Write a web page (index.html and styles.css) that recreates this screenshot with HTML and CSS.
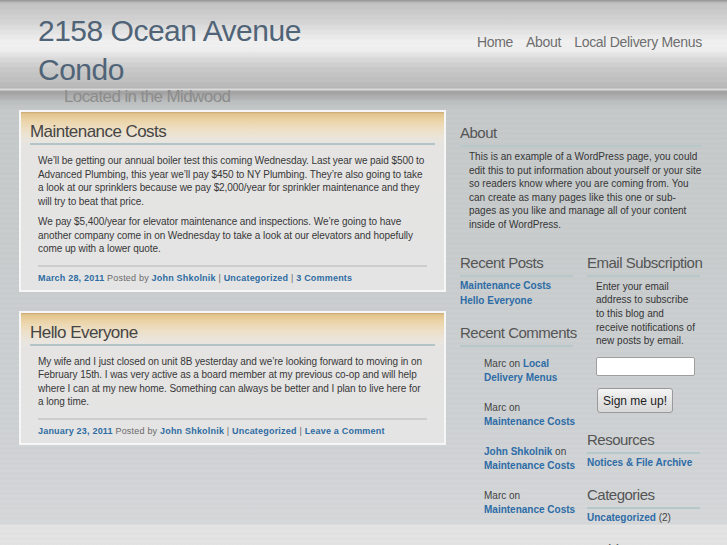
FILE: index.html
```html
<!DOCTYPE html>
<html lang="en">
<head>
<meta charset="utf-8">
<title>2158 Ocean Avenue Condo</title>
<link rel="stylesheet" href="styles.css">
</head>
<body>
<div class="page">
  <header class="masthead">
    <div class="brand">
      <h1 class="site-title">2158 Ocean Avenue Condo</h1>
      <p class="tagline">Located in the Midwood</p>
    </div>
    <nav class="nav">
      <a href="#">Home</a>
      <a href="#">About</a>
      <a href="#">Local Delivery Menus</a>
    </nav>
  </header>

  <div class="main">
    <div class="content">
      <article class="post">
        <h2 class="post-title">Maintenance Costs</h2>
        <div class="entry">
          <p>We’ll be getting our annual boiler test this coming Wednesday. Last year we paid $500 to Advanced Plumbing, this year we’ll pay $450 to NY Plumbing. They’re also going to take a look at our sprinklers because we pay $2,000/year for sprinkler maintenance and they will try to beat that price.</p>
          <p>We pay $5,400/year for elevator maintenance and inspections. We’re going to have another company come in on Wednesday to take a look at our elevators and hopefully come up with a lower quote.</p>
        </div>
        <div class="meta"><a href="#">March 28, 2011</a> Posted by <a href="#">John Shkolnik</a> | <a href="#">Uncategorized</a> | <a href="#">3 Comments</a></div>
      </article>

      <article class="post">
        <h2 class="post-title">Hello Everyone</h2>
        <div class="entry">
          <p>My wife and I just closed on unit 8B yesterday and we’re looking forward to moving in on February 15th. I was very active as a board member at my previous co-op and will help where I can at my new home. Something can always be better and I plan to live here for a long time.</p>
        </div>
        <div class="meta"><a href="#">January 23, 2011</a> Posted by <a href="#">John Shkolnik</a> | <a href="#">Uncategorized</a> | <a href="#">Leave a Comment</a></div>
      </article>
    </div>

    <aside class="sidebar">
      <section class="widget widget-about">
        <h3 class="widget-title">About</h3>
        <p class="about-text">This is an example of a WordPress page, you could edit this to put information about yourself or your site so readers know where you are coming from. You can create as many pages like this one or sub-pages as you like and manage all of your content inside of WordPress.</p>
      </section>

      <div class="columns">
        <div class="col">
          <section class="widget">
            <h3 class="widget-title">Recent Posts</h3>
            <ul class="links">
              <li><a href="#">Maintenance Costs</a></li>
              <li><a href="#">Hello Everyone</a></li>
            </ul>
          </section>
          <section class="widget">
            <h3 class="widget-title">Recent Comments</h3>
            <ul class="comments">
              <li>Marc on <a href="#">Local Delivery Menus</a></li>
              <li>Marc on <a href="#">Maintenance Costs</a></li>
              <li><a href="#">John Shkolnik</a> on <a href="#">Maintenance Costs</a></li>
              <li>Marc on <a href="#">Maintenance Costs</a></li>
            </ul>
          </section>
        </div>
        <div class="col">
          <section class="widget widget-email">
            <h3 class="widget-title">Email Subscription</h3>
            <p class="email-text">Enter your email address to subscribe to this blog and receive notifications of new posts by email.</p>
            <form class="email-form">
              <input class="email-input" type="text" aria-label="Email">
              <button class="email-button" type="button">Sign me up!</button>
            </form>
          </section>
          <section class="widget">
            <h3 class="widget-title">Resources</h3>
            <ul class="links">
              <li><a href="#">Notices &amp; File Archive</a></li>
            </ul>
          </section>
          <section class="widget">
            <h3 class="widget-title">Categories</h3>
            <ul class="links">
              <li><a href="#">Uncategorized</a> (2)</li>
            </ul>
          </section>
          <section class="widget">
            <h3 class="widget-title">Archives</h3>
          </section>
        </div>
      </div>
    </aside>
  </div>
</div>
</body>
</html>
```

FILE: styles.css
```css
html, body {
  margin: 0;
  padding: 0;
}

body {
  min-height: 100vh;
  font-family: "Liberation Sans", Arial, sans-serif;
  color: #3a3a3a;
  background:
    repeating-linear-gradient(to bottom,
      rgba(255, 255, 255, 0.025) 0,
      rgba(255, 255, 255, 0.025) 2px,
      rgba(0, 0, 0, 0.008) 2px,
      rgba(0, 0, 0, 0.008) 5px),
    linear-gradient(to bottom,
      #8e8e8e 0,
      #c2c2c2 3px,
      #cbcbcb 12px,
      #d4d4d4 22px,
      #e4e4e4 32px,
      #f1f1f1 42px,
      #efefef 50px,
      #dcdcdc 58px,
      #cacaca 68px,
      #c0c0c0 80px,
      #b6b6b6 88px,
      #dadada 89px,
      #dcdcdc 90px,
      #a0a0a0 91px,
      #a9a9a9 95px,
      #bcbfc0 102px,
      #c5c9ca 110px,
      #c8cccd 250px,
      #ced1d3 420px,
      #d5d7d9 524px,
      #e3e3e3 525px,
      #e4e4e4 100%);
  overflow: hidden;
}

.page {
  width: 727px;
}

a {
  text-decoration: none;
}

/* Header */
.masthead {
  display: flex;
  justify-content: space-between;
  align-items: flex-start;
}

.brand {
  width: 330px;
  padding-left: 38px;
}

.site-title {
  margin: 11px 0 0;
  font-size: 30px;
  line-height: 39px;
  font-weight: normal;
  letter-spacing: -0.5px;
  color: #506478;
}

.tagline {
  margin: -1px 0 0 26px;
  font-size: 17px;
  line-height: 18px;
  letter-spacing: -0.6px;
  color: #8c8c8c;
  white-space: nowrap;
}

.nav {
  display: flex;
  gap: 13px;
  padding: 34px 25px 0 0;
}

.nav a {
  font-size: 14px;
  line-height: 16px;
  letter-spacing: -0.3px;
  color: #6e6e6e;
}

/* Main layout */
.main {
  display: flex;
  align-items: flex-start;
  margin-top: 4px;
  padding-left: 19px;
}

.content {
  width: 427px;
  display: flex;
  flex-direction: column;
  gap: 19px;
}

.post {
  box-sizing: border-box;
  width: 427px;
  border: 2px solid #f6f6f6;
  padding: 9px 9px 5px;
  background: linear-gradient(to bottom,
    #c9a872 0,
    #e2c48e 2px,
    #ebd3a6 8px,
    #ede0c8 18px,
    #e9e5de 28px,
    #e5e4e3 36px,
    #e4e4e4 100%);
}

.post-title {
  margin: 0;
  font-size: 17px;
  line-height: 22px;
  font-weight: normal;
  letter-spacing: -0.55px;
  color: #454545;
  border-bottom: 2px solid #b3c4c8;
}

.entry {
  margin: 9px 8px 0;
  padding-bottom: 9px;
  border-bottom: 2px solid #cdcdcd;
}

.entry p {
  margin: 0 0 7px;
  font-size: 10px;
  line-height: 13.5px;
  letter-spacing: -0.07px;
  color: #383838;
}

.entry p:last-child {
  margin-bottom: 0;
}

.meta {
  margin: 0 8px;
  padding-top: 4px;
  font-size: 9px;
  line-height: 14px;
  letter-spacing: 0.2px;
  color: #6a6a6a;
}

.meta a {
  font-weight: bold;
  color: #2f6ca2;
}

/* Sidebar */
.sidebar {
  width: 242px;
  margin-left: 14px;
  padding-top: 14px;
}

.widget {
  margin-bottom: 16px;
}

.widget-about {
  margin-bottom: 22px;
}

.widget-title {
  margin: 0 0 3px;
  padding-bottom: 3px;
  font-size: 15px;
  line-height: 18px;
  font-weight: normal;
  letter-spacing: -0.5px;
  color: #555;
  border-bottom: 2px solid #b7c8ca;
  white-space: nowrap;
}

.about-text {
  margin: 0;
  padding-left: 9px;
  font-size: 10px;
  line-height: 13.6px;
  color: #363636;
}

.columns {
  display: grid;
  grid-template-columns: 113px 113px;
  column-gap: 14px;
}

.links {
  list-style: none;
  margin: 0;
  padding: 0;
  font-size: 10px;
  line-height: 15px;
  color: #444;
}

.widget .links {
  margin-top: -2px;
}

.links a,
.comments a {
  font-weight: bold;
  color: #2d6ca6;
}

.comments {
  list-style: none;
  margin: 0;
  padding: 7px 0 0 24px;
  width: 95px;
  font-size: 10px;
  line-height: 14.5px;
  color: #444;
}

.comments li {
  margin-bottom: 15px;
}

.widget-email {
  margin-bottom: 18px;
}

.email-text {
  width: 100px;
  margin: 0;
  padding-left: 9px;
  font-size: 10px;
  line-height: 13.7px;
  color: #363636;
}

.email-form {
  display: flex;
  flex-direction: column;
  align-items: flex-start;
  gap: 12px;
  margin-top: 9px;
  padding-left: 9px;
}

.email-input {
  box-sizing: border-box;
  width: 99px;
  height: 19px;
  margin: 0;
  border: 1px solid #9e9e9e;
  border-radius: 2px;
  background: #fff;
}

.email-button {
  box-sizing: border-box;
  height: 25px;
  margin: 0 0 0 1px;
  padding: 0 5px;
  border: 1px solid #9a9a9a;
  border-radius: 3px;
  background: linear-gradient(to bottom, #f4f4f4, #e2e2e2 60%, #d8d8d8);
  font-family: "Liberation Sans", Arial, sans-serif;
  font-size: 12px;
  color: #222;
}
```
